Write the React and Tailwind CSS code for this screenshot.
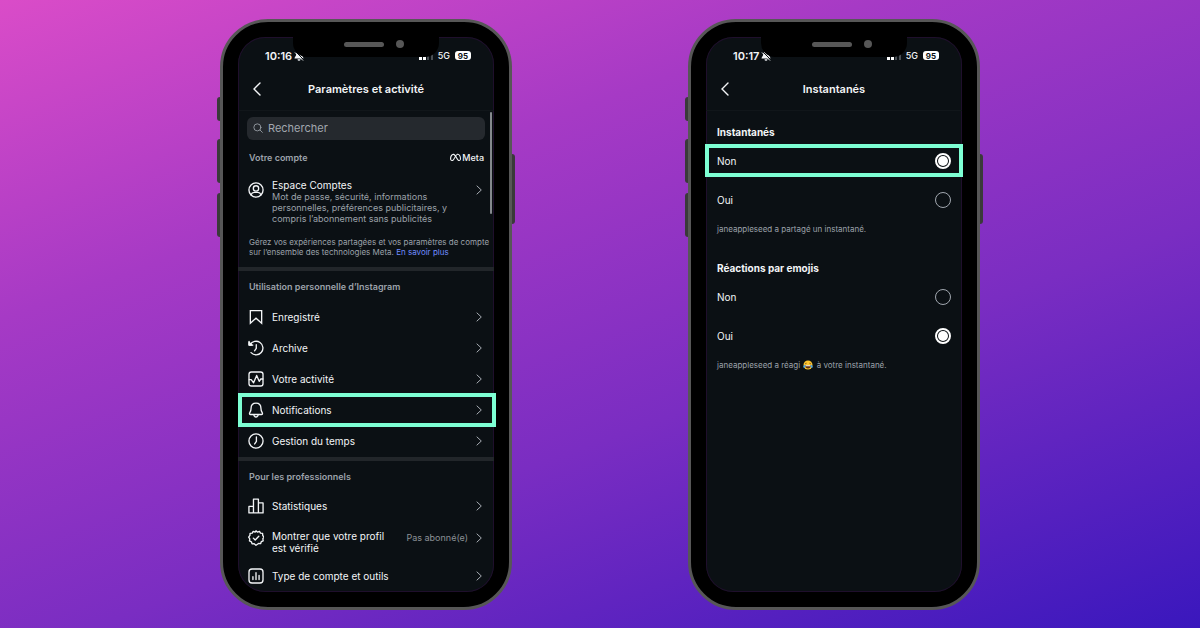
import React, { useState } from "react";
import { FaMeta } from "react-icons/fa6";

function Icon({ children, className = "size-4" }) {
  return (
    <svg
      viewBox="0 0 24 24"
      fill="none"
      stroke="currentColor"
      strokeWidth="2"
      strokeLinecap="round"
      strokeLinejoin="round"
      className={`shrink-0 ${className}`}
      aria-hidden="true"
    >
      {children}
    </svg>
  );
}

const icons = {
  account: (
    <Icon>
      <circle cx="12" cy="12" r="10.6" />
      <circle cx="12" cy="9.6" r="4" />
      <path d="M4.6 19.2c.9-2.6 2.6-3.6 4.6-3.6h5.6c2 0 3.7 1 4.6 3.6" />
    </Icon>
  ),
  bookmark: (
    <Icon>
      <path d="M3.5 2.5h17v19L12 13.8 3.5 21.5z" strokeLinejoin="miter" />
    </Icon>
  ),
  archive: (
    <Icon>
      <path d="M3.2 7.2A10.2 10.2 0 1 1 4.600 18.9" />
      <path d="M1.6 2.2v5.400h5.600" />
      <path d="M1.600 3.400l4.200 4.200H1.600z" fill="currentColor" />
      <path d="M12.400 7v5.600L9.800 16.200" />
    </Icon>
  ),
  activity: (
    <Icon>
      <rect x="1.5" y="1.5" width="21" height="21" rx="3.5" />
      <path d="M1.800 13h3l3.600 4.800L13 6.600l3.800 8.800 2.400-3.400h3" />
    </Icon>
  ),
  bell: (
    <Icon>
      <path d="M12 1.600c-4.400 0-7.400 3.200-7.400 7.800 0 3.600-.6 4.600-1.700 6.200-1 1.500-.9 3.200 1 3.200h16.200c1.900 0 2-1.700 1-3.200-1.100-1.600-1.700-2.600-1.700-6.200 0-4.600-3-7.800-7.400-7.800z" />
      <path d="M8.800 19.200c.2 2 1.500 3.300 3.200 3.300s3-1.300 3.200-3.300" />
    </Icon>
  ),
  clock: (
    <Icon>
      <circle cx="12" cy="12" r="10.6" />
      <path d="M12.600 6v6.600L10 16.400" />
    </Icon>
  ),
  stats: (
    <Icon>
      <path d="M1.400 12.600h6.800v9.800H1.400zM8.200 1.600h7.400v20.800H8.200zM15.600 7.400h7v15h-7z" />
    </Icon>
  ),
  verified: (
    <Icon>
      <path d="M12 1.200l2.300 2 2.900-1.200 1.500 2.700 3.200.3.200 3.200 1.900 2.400-1.700 2.500.5 3.100-2.900 1.300-1 3-3.100-.3L12 22.800l-2.800-2.300-3.100.2-1-3-2.900-1.300.5-3.100L1 10.800l1.900-2.600.2-3.200 3.200-.3L7.800 2l2.900 1.200z" />
      <path d="M8 12.200l2.800 2.800 5.400-5.600" />
    </Icon>
  ),
  tools: (
    <Icon>
      <rect x="1.5" y="1.5" width="21" height="21" rx="4.5" />
      <path d="M7.400 13v4.400M12 7v10.400M16.600 11v6.400" />
    </Icon>
  ),
};

const personalItems = [
  { label: "Enregistré", icon: icons.bookmark },
  { label: "Archive", icon: icons.archive },
  { label: "Votre activité", icon: icons.activity },
  { label: "Notifications", icon: icons.bell, highlighted: true },
  { label: "Gestion du temps", icon: icons.clock },
];

function Chevron() {
  return (
    <svg viewBox="0 0 6 10" className="h-[10px] w-[6px] shrink-0 text-[#a8adb4]" fill="none" stroke="currentColor" aria-hidden="true">
      <path d="M0.7 0.7L5.3 5L0.7 9.3" />
    </svg>
  );
}

function LaughingFace() {
  return (
    <svg viewBox="0 0 20 20" className="mx-px inline-block size-[10px] align-[-2px]" role="img" aria-label="😂">
      <circle cx="10" cy="10" r="9" fill="#fcc52f" />
      <path d="M4.200 10.400h11.600c0 4-2.400 6.600-5.800 6.600s-5.800-2.600-5.800-6.600z" fill="#5c2f12" />
      <path d="M5 10.600h10l-.4 1.800H5.400z" fill="#fff" />
      <path d="M4.200 7.600l3-1.200M15.800 7.600l-3-1.200" stroke="#5c2f12" strokeWidth="1.4" />
      <path d="M4.600 9.400C1.600 10 .2 12 .6 14s3 2.400 3.800.4z" fill="#4aa8e8" />
      <path d="M15.400 9.400c3 .6 4.400 2.600 4 4.600s-3 2.400-3.800.4z" fill="#4aa8e8" />
    </svg>
  );
}

function StatusBar({ time }) {
  return (
    <div className="flex h-[30px] items-start justify-between pt-[11px] pr-[23px] pl-[27px] leading-4">
      <div className="flex items-center gap-[2px] text-[11px] font-semibold">
        <span>{time}</span>
        <svg viewBox="0 0 20 20" className="size-[10px]" aria-hidden="true">
          <path d="M10 1c-3.400 0-5.600 2-5.600 5.600 0 4-3.400 5.400-3.400 8.400h18c0-3-3.400-4.400-3.400-8.400C15.600 3 13.400 1 10 1zM7 16.500h6a3 3 0 0 1-6 0z" fill="currentColor" />
          <path d="M4 2l15 15" stroke="#0b1014" strokeWidth="2" />
          <path d="M2 3l16 16" stroke="currentColor" strokeWidth="2" />
        </svg>
      </div>
      <div className="flex h-4 items-center gap-[5px]">
        <svg viewBox="0 0 14 9" className="h-[9px] w-[14px]" aria-hidden="true">
          <path d="M0 6h3v3H0zM4 4h3v5H4z" fill="#fff" />
          <path d="M8 2h2v7H8zM12 0h2v9h-2z" fill="#4a4f54" />
        </svg>
        <span className="text-[9px] font-medium">5G</span>
        <span className="flex h-[9px] w-4 items-center justify-center rounded-[3px] bg-white text-[8px] font-bold text-[#0b1014]">
          95
        </span>
      </div>
    </div>
  );
}

function Phone({ time, title, children }) {
  return (
    <section className="relative flex w-[292px] rounded-[48px] border-[3px] border-[#575757] bg-black p-[15px]">
      {/* Side buttons */}
      <span className="absolute top-[75px] -left-[6px] h-6 w-[3px] rounded-l-sm bg-[#3a3a3a]" />
      <span className="absolute top-[117px] -left-[6px] h-11 w-[3px] rounded-l-sm bg-[#3a3a3a]" />
      <span className="absolute top-[171px] -left-[6px] h-11 w-[3px] rounded-l-sm bg-[#3a3a3a]" />
      <span className="absolute top-[132px] -right-[6px] h-[70px] w-[3px] rounded-r-sm bg-[#3a3a3a]" />

      <div className="relative min-w-0 flex-1 rounded-[27px] bg-[#0b1014] shadow-[inset_0_0_0_1px_#1f0f2c]">
        <StatusBar time={time} />

        {/* Notch */}
        <div className="absolute top-0 left-[55px] h-5 w-[146px] rounded-b-[14px] bg-black">
          <span className="absolute top-[5px] left-[51px] h-[5px] w-10 rounded-full bg-[#575757]" />
          <span className="absolute top-[3px] left-[103px] size-2 rounded-full bg-[#575757]" />
        </div>

        <header className="grid h-11 grid-cols-[16px_1fr_16px] items-center border-b border-[#11161a] px-[11px] pt-[2px]">
          <button type="button" aria-label="Retour" className="flex h-6 items-center justify-center">
            <svg viewBox="0 0 8 14" className="h-[14px] w-2" fill="none" stroke="currentColor" strokeWidth="1.4" strokeLinecap="round">
              <path d="M7 1L1 7l6 6" />
            </svg>
          </button>
          <h1 className="text-center text-[11px] font-semibold">{title}</h1>
        </header>

        {children}
      </div>
    </section>
  );
}

function SectionTitle({ children }) {
  return <h2 className="mt-[9px] mb-[7px] px-[11px] text-[9px] leading-[14px] font-semibold text-[#9ca2aa]">{children}</h2>;
}

function MenuRow({ label, icon, highlighted }) {
  return (
    <a href="#" className="relative flex h-[31px] items-center gap-2 pr-[12px] pl-[10px] text-[10px]">
      {icon}
      <span className="flex-1">{label}</span>
      <Chevron />
      {highlighted && <span className="absolute -top-[2px] -right-[2px] -bottom-px left-0 border-4 border-[#7dffd3]" />}
    </a>
  );
}

function SettingsScreen() {
  const [query, setQuery] = useState("");

  return (
    <>
      <span className="absolute top-[75px] right-[2px] h-[102px] w-[2px] rounded-full bg-[#85898d]" />

      <label className="mx-[9px] mt-[6px] flex h-[23px] items-center gap-[5px] rounded-md bg-[#25292e] px-[6px] text-[#a1a7af]">
        <Icon className="size-[10px]">
          <circle cx="10.5" cy="10.5" r="8.5" />
          <path d="M17 17l5.500 5.500" />
        </Icon>
        <input
          type="text"
          aria-label="Rechercher"
          placeholder="Rechercher"
          value={query}
          onChange={(e) => setQuery(e.target.value)}
          className="min-w-0 flex-1 bg-transparent text-[11px] outline-none placeholder:text-[#a1a7af]"
        />
      </label>

      <div className="mt-[11px] flex items-center justify-between pr-[10px] pl-[11px] leading-[14px]">
        <h2 className="text-[9px] font-semibold text-[#9ca2aa]">Votre compte</h2>
        <span className="flex items-center gap-px text-[9px] font-medium">
          <FaMeta className="size-[11px]" aria-hidden="true" />
          Meta
        </span>
      </div>

      <a href="#" className="mt-[14px] flex items-start gap-2 pr-[12px] pl-[10px]">
        <span className="mt-[3px]">{icons.account}</span>
        <span className="flex-1">
          <span className="block text-[10px] leading-[12px]">Espace Comptes</span>
          <span className="block text-[9px] leading-[11px] text-[#9ca2aa]">
            Mot de passe, sécurité, informations
            <br />
            personnelles, préférences publicitaires, y
            <br />
            compris l’abonnement sans publicités
          </span>
        </span>
        <span className="mt-[6px]">
          <Chevron />
        </span>
      </a>

      <p className="mt-[13px] mb-[10px] pl-[11px] text-[8px] leading-[10px] whitespace-nowrap text-[#9ca2aa]">
        Gérez vos expériences partagées et vos paramètres de compte
        <br />
        sur l’ensemble des technologies Meta.{" "}
        <a href="#" className="text-[#708dff]">
          En savoir plus
        </a>
      </p>

      <hr className="h-1 border-0 bg-[#22262a]" />
      <SectionTitle>Utilisation personnelle d’Instagram</SectionTitle>
      <nav className="pt-px">
        {personalItems.map((item) => (
          <MenuRow key={item.label} {...item} />
        ))}
      </nav>

      <hr className="h-1 border-0 bg-[#22262a]" />
      <SectionTitle>Pour les professionnels</SectionTitle>
      <nav>
        <MenuRow label="Statistiques" icon={icons.stats} />
        <a href="#" className="flex items-start gap-2 pt-2 pr-[12px] pb-[7px] pl-[10px] text-[10px] leading-[12px]">
          {icons.verified}
          <span className="flex-1">
            Montrer que votre profil
            <br />
            est vérifié
          </span>
          <span className="flex h-4 items-center gap-2">
            <span className="text-[9px] text-[#8b9097]">Pas abonné(e)</span>
            <Chevron />
          </span>
        </a>
        <MenuRow label="Type de compte et outils" icon={icons.tools} />
      </nav>
    </>
  );
}

function RadioSection({ title, name, initial, highlighted, note }) {
  const [value, setValue] = useState(initial);

  return (
    <fieldset className="px-[11px]">
      <legend className="mb-[3px] text-[10px] leading-[14px] font-bold">{title}</legend>
      {["Non", "Oui"].map((option) => (
        <label key={option} className="relative -mx-[11px] flex h-[39px] items-center justify-between px-[11px] text-[10px]">
          {option}
          <input
            type="radio"
            name={name}
            value={option}
            checked={value === option}
            onChange={() => setValue(option)}
            className="size-4 appearance-none rounded-full border border-[#a1a7af] checked:border-2 checked:border-white checked:bg-white checked:bg-clip-content checked:p-px"
          />
          {highlighted === option && <span className="absolute top-[2px] -right-px bottom-1 -left-px border-4 border-[#7dffd3]" />}
        </label>
      ))}
      <p className="mt-1 text-[8px] leading-[10px] text-[#9ca2aa]">{note}</p>
    </fieldset>
  );
}

export default function App() {
  return (
    <main className="flex min-h-screen items-center justify-center bg-[linear-gradient(160deg,#da4cc8,#a63ac5_30%,#7a2dc2_62%,#3a17bd)] font-['Inter',sans-serif] text-[#f3f5f7]">
      <div className="flex flex-wrap items-stretch justify-center gap-x-44 gap-y-10">
        <Phone time="10:16" title="Paramètres et activité">
          <SettingsScreen />
        </Phone>

        <Phone time="10:17" title="Instantanés">
          <div className="flex flex-col gap-[27px] pt-[14px]">
            <RadioSection
              title="Instantanés"
              name="snapshots"
              initial="Non"
              highlighted="Non"
              note="janeappleseed a partagé un instantané."
            />
            <RadioSection
              title="Réactions par emojis"
              name="reactions"
              initial="Oui"
              note={
                <>
                  janeappleseed a réagi <LaughingFace /> à votre instantané.
                </>
              }
            />
          </div>
        </Phone>
      </div>
    </main>
  );
}
